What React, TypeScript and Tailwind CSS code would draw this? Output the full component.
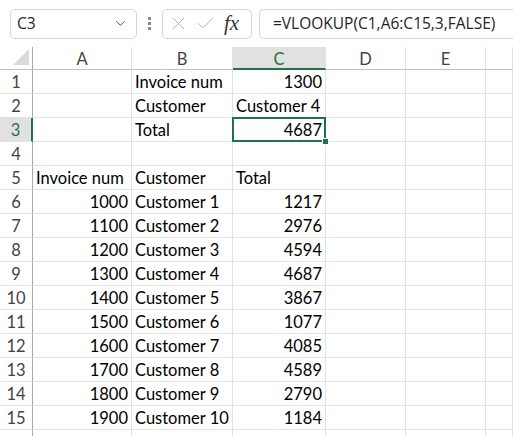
import { ChevronDown, X, Check } from "lucide-react";

type Row = { a?: string; b?: string; c?: string; cAlign?: "left" | "right" };

const rows: Row[] = [
  { b: "Invoice num", c: "1300" },
  { b: "Customer", c: "Customer 4", cAlign: "left" },
  { b: "Total", c: "4687" },
  {},
  { a: "Invoice num", b: "Customer", c: "Total", cAlign: "left" },
  { a: "1000", b: "Customer 1", c: "1217" },
  { a: "1100", b: "Customer 2", c: "2976" },
  { a: "1200", b: "Customer 3", c: "4594" },
  { a: "1300", b: "Customer 4", c: "4687" },
  { a: "1400", b: "Customer 5", c: "3867" },
  { a: "1500", b: "Customer 6", c: "1077" },
  { a: "1600", b: "Customer 7", c: "4085" },
  { a: "1700", b: "Customer 8", c: "4589" },
  { a: "1800", b: "Customer 9", c: "2790" },
  { a: "1900", b: "Customer 10", c: "1184" },
];

const cols = ["A", "B", "C", "D", "E", ""];
const isNum = (v?: string) => !!v && /^\d+$/.test(v);

function Cell({ value, align, selected }: { value?: string; align?: "left" | "right"; selected?: boolean }) {
  const right = align ? align === "right" : isNum(value);
  return (
    <div
      className={
        "relative h-6 border-r border-b border-[#e1e1e1] px-[3px] leading-[24px] whitespace-nowrap " +
        (right ? "text-right" : "text-left")
      }
    >
      {value}
      {selected && (
        <>
          <div className="absolute z-10 -left-px -top-px right-[-1px] bottom-[-1px] border-2 border-[#217346] pointer-events-none" />
          <div className="absolute z-20 right-[-4px] bottom-[-4px] w-[7px] h-[7px] bg-[#217346] border border-white" />
        </>
      )}
    </div>
  );
}

export default function App() {
  return (
    <div className="w-[513px] h-[436px] overflow-hidden bg-white text-black font-['Lato',sans-serif]">
      {/* formula bar */}
      <div className="h-[47px] flex items-center pl-[10px] font-['Open_Sans',sans-serif] text-[15.5px] text-[#242424]">
        <div className="w-[127px] h-[30px] rounded-[5px] border border-[#d6d6d6] flex items-center justify-between pl-[6px] pr-[8px]">
          <span>C3</span>
          <ChevronDown size={15} strokeWidth={1.6} className="text-[#555]" />
        </div>
        <div className="w-[25px] flex flex-col items-center gap-[2px]">
          <span className="w-[3px] h-[3px] bg-[#8a8a8a]" />
          <span className="w-[3px] h-[3px] bg-[#8a8a8a]" />
          <span className="w-[3px] h-[3px] bg-[#8a8a8a]" />
        </div>
        <div className="w-[90px] h-[30px] rounded-[5px] border border-[#d6d6d6] flex items-center pl-[5px] gap-[6px]">
          <X size={21} strokeWidth={1.1} className="text-[#b4b4b4]" />
          <Check size={21} strokeWidth={1.1} className="text-[#b4b4b4]" />
          <span className="ml-[2px] font-['Liberation_Serif',serif] italic text-[21px] leading-none text-[#333]">fx</span>
        </div>
        <div className="ml-[7px] flex-1 h-[30px] rounded-l-[5px] border border-r-0 border-[#d6d6d6] flex items-center pl-[13px]">
          =VLOOKUP(C1,A6:C15,3,FALSE)
        </div>
      </div>

      {/* sheet */}
      <div className="grid grid-cols-[33px_99px_101px_93px_80px_80px_1fr] text-[16.5px]">
        <div className="relative h-[23px] border-r border-b border-[#c2c2c2] border-r-[#a8a8a8]">
          <div className="absolute right-[3px] bottom-[4px] w-0 h-0 border-l-[16px] border-l-transparent border-b-[16px] border-b-[#dadada]" />
        </div>
        {cols.map((c, i) => (
          <div
            key={i}
            className={
              "h-[23px] border-r border-[#e1e1e1] text-center leading-[24px] " +
              (c === "C"
                ? "bg-[#e1e1e1] text-[#217346] border-b-2 border-b-[#217346]"
                : "text-[#444] border-b border-b-[#c2c2c2]")
            }
          >
            {c}
          </div>
        ))}
        {rows.map((r, i) => {
          const sel = i === 2;
          return [
            <div
              key={`h${i}`}
              className={
                "h-6 border-b border-[#e1e1e1] text-center leading-[24px] " +
                (sel
                  ? "bg-[#e1e1e1] text-[#217346] border-r-2 border-r-[#217346]"
                  : "text-[#444] border-r border-r-[#a8a8a8]")
              }
            >
              {i + 1}
            </div>,
            <Cell key={`a${i}`} value={r.a} />,
            <Cell key={`b${i}`} value={r.b} />,
            <Cell key={`c${i}`} value={r.c} align={r.cAlign} selected={sel} />,
            <Cell key={`d${i}`} />,
            <Cell key={`e${i}`} />,
            <Cell key={`f${i}`} />,
          ];
        })}
        {/* partly visible row 16 */}
        <div className="h-6 border-r border-r-[#a8a8a8]" />
        {cols.map((_, i) => (
          <div key={`t${i}`} className="h-6 border-r border-[#e1e1e1]" />
        ))}
      </div>
    </div>
  );
}
